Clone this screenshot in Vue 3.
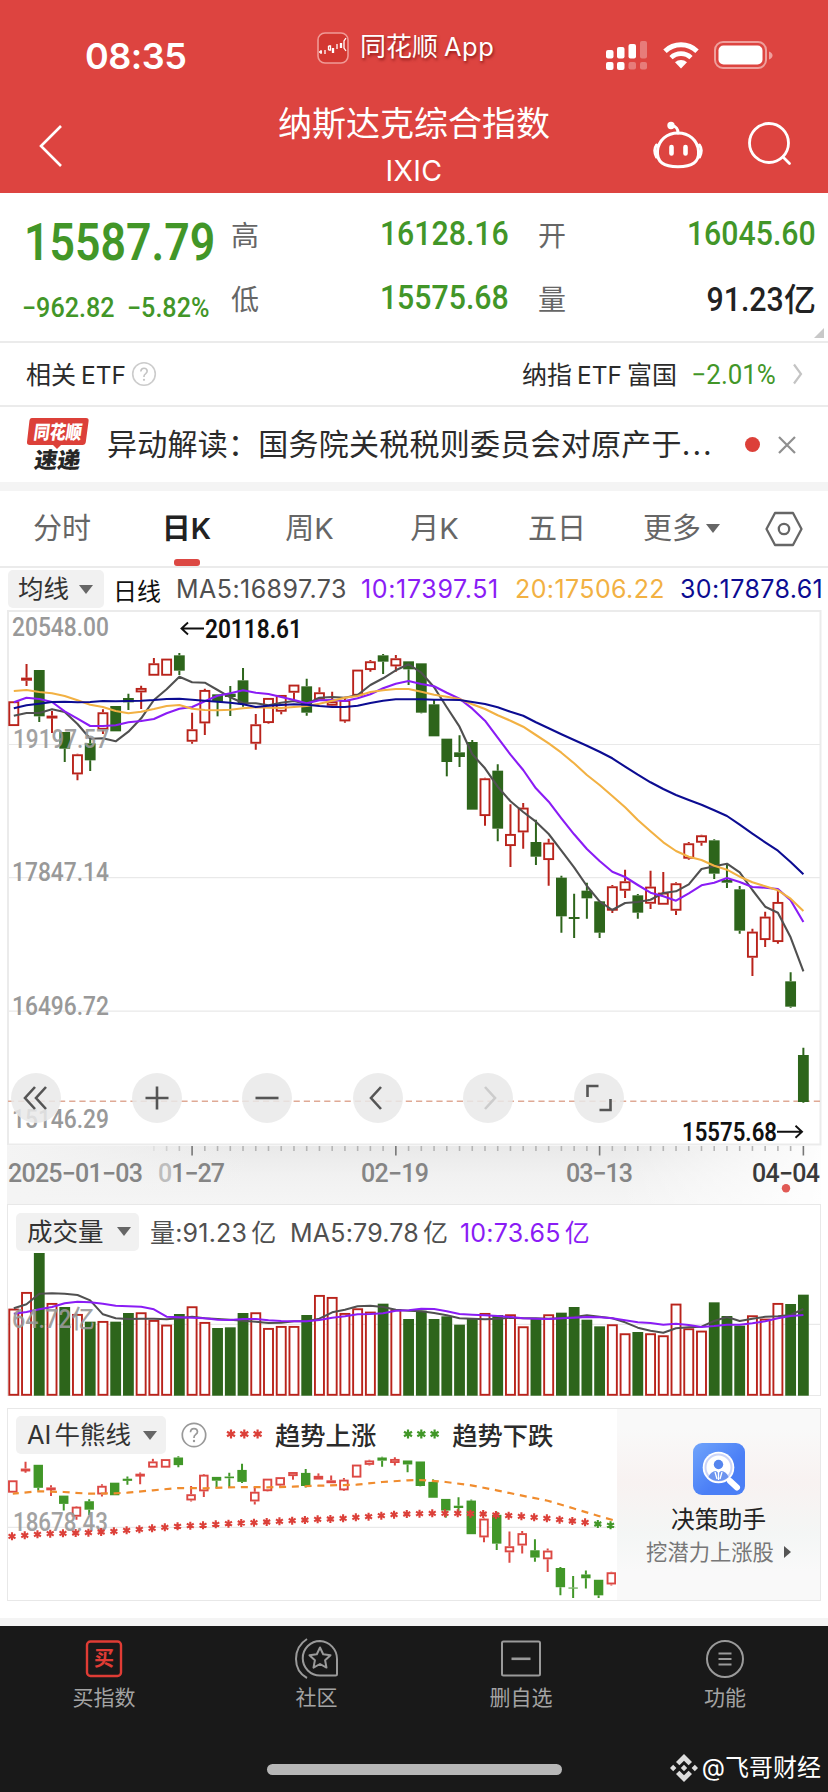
<template>
  <div class="page">
    <header class="top">
      <div class="status">
        <span class="time">08:35</span>
        <div class="capsule">
          <svg width="32" height="32" viewBox="0 0 32 32">
            <rect x="1" y="1" width="30" height="30" rx="7" fill="#d33731" stroke="#f09a96" stroke-width="1.6" />
            <path d="M2 20h3M4 18v4M8 18v4M11.500 14v4M11.500 14h2v4h-2M15.500 16v5M16.500 16v5M20 12v5M23.500 11v5M24.500 11v5M29 6l-2 3v7l2 3" fill="none" stroke="#fff" stroke-width="1.300" />
          </svg>
          <span class="capsule-text">同花顺<b>App</b></span>
        </div>
        <svg class="phone" width="170" height="32" viewBox="0 0 170 32">
          <g fill="#fff">
            <rect x="1" y="10" width="7.500" height="8.500" rx="2" />
            <rect x="12" y="7" width="7.500" height="11.500" rx="2" />
            <rect x="23.500" y="4" width="7.500" height="14.500" rx="2" />
            <rect x="1" y="22" width="7.500" height="8" rx="2" />
            <rect x="12" y="22" width="7.500" height="8" rx="2" />
            <g opacity=".3">
              <rect x="35" y="1" width="7" height="17.500" rx="2" />
              <rect x="23.500" y="22" width="7.500" height="7.500" rx="2" />
              <rect x="35" y="22" width="7" height="7.500" rx="2" />
            </g>
          </g>
          <g fill="none" stroke="#fff" stroke-width="5">
            <path d="M60 11.200a23.200 23.200 0 0 1 32 0" />
            <path d="M66 17.600a14.500 14.500 0 0 1 20 0" stroke-width="4.600" />
          </g>
          <path d="M76 28.500l-6-6.200a9 9 0 0 1 12 0z" fill="#fff" />
          <rect x="110" y="2" width="51" height="26" rx="8" fill="none" stroke="#ef9f9c" stroke-width="2" />
          <rect x="113.500" y="5.500" width="44" height="19" rx="5" fill="#fff" />
          <path d="M164 11.500q3.500 1.500 3.500 4t-3.500 4z" fill="#ef9f9c" />
        </svg>
      </div>
      <div class="titlebar">
        <svg class="back" width="26" height="44" viewBox="0 0 26 44">
          <path d="M23 2L3 22l20 20" fill="none" stroke="#fff" stroke-width="2.600" />
        </svg>
        <div class="title">
          <h1>纳斯达克综合指数</h1>
          <p>IXIC</p>
        </div>
        <div class="top-icons">
          <svg width="52" height="48" viewBox="0 0 52 48" fill="none" stroke="#fff" stroke-width="3" stroke-linecap="round">
            <path d="M26 12c11 0 19.500 7 20.500 18 .8 11-6 15.800-20.500 15.800S4.700 41 5.500 30C6.500 19 15 12 26 12z" />
            <path d="M4.500 24q-3.500 5 0 12M47.500 24q3.500 5 0 12" />
            <path d="M26 12c0-5-2-6.500-6-7.500" />
            <circle cx="19" cy="4.500" r="2.200" fill="#fff" />
            <path d="M19.500 26v6.500M33.500 26v6.500" stroke-width="4.600" />
          </svg>
          <svg width="46" height="46" viewBox="0 0 46 46" fill="none" stroke="#fff" stroke-width="2.800" stroke-linecap="round">
            <circle cx="22" cy="22" r="19.500" />
            <path d="M36 36l6.500 6.500" />
          </svg>
        </div>
      </div>
    </header>

    <section class="quote">
      <div class="quote-main">
        <div class="price"><span class="din">15587.79</span></div>
        <div class="change"><span class="din">−962.82</span><span class="din">−5.82%</span></div>
      </div>
      <dl class="stats">
        <div v-for="s in stats" :key="s.label" class="stat">
          <dt>{{ s.label }}</dt>
          <dd :class="{ dark: s.unit }"><span class="din">{{ s.value }}</span><i v-if="s.unit">{{ s.unit }}</i></dd>
        </div>
      </dl>
      <svg class="corner" width="10" height="10" viewBox="0 0 10 10"><path d="M10 0v10H0z" fill="#c8c8c8" /></svg>
    </section>

    <section class="etf">
      <span class="cjk-latin">相关<b>ETF</b></span>
      <svg class="help" width="26" height="26" viewBox="0 0 26 26">
        <circle cx="13" cy="13" r="11.300" fill="none" stroke="#ccc" stroke-width="1.600" />
        <path d="M9.800 10.500q.2-3.300 3.200-3.300t3.200 2.900q0 1.500-1.700 2.700-1.500 1-1.500 2.500v.7" fill="none" stroke="#c4c4c4" stroke-width="1.600" />
        <circle cx="13" cy="18.800" r="1.100" fill="#c4c4c4" />
      </svg>
      <span class="fund cjk-latin">纳指<b>ETF</b>富国</span>
      <span class="rate"><span class="din">−2.01%</span></span>
      <svg width="12" height="24" viewBox="0 0 12 24"><path d="M2 2.500l7 9.500-7 9.500" fill="none" stroke="#c4c4c4" stroke-width="2.200" /></svg>
    </section>

    <section class="news">
      <svg width="66" height="56" viewBox="0 0 66 56" class="badge">
        <path d="M6 1h54q3 0 2.600 3l-2.800 21q-.4 3-3.400 3H35l-4 4-4-4H4q-3.400 0-3-3L3.400 4Q3.700 1 6 1z" fill="#dc4039" />
        <text transform="translate(7 22) skewX(-8)" textLength="48" lengthAdjust="spacingAndGlyphs" font-size="19" font-weight="900" fill="#fff">同花顺</text>
        <text transform="translate(7.500 51) skewX(-8)" textLength="46" lengthAdjust="spacingAndGlyphs" font-size="22" font-weight="900" fill="#262626">速递</text>
      </svg>
      <p>异动解读：国务院关税税则委员会对原产于<span>...</span></p>
      <i class="dot"></i>
      <svg class="close" width="20" height="20" viewBox="0 0 20 20"><path d="M2 2l16 16M18 2L2 18" stroke="#8f8f8f" stroke-width="2.200" /></svg>
    </section>

    <nav class="tabs">
      <a v-for="t in tabs" :key="t" :class="{ active: t === current }" @click="current = t">{{ t }}</a>
      <a class="more">更多<i class="caret"></i></a>
      <svg width="40" height="36" viewBox="0 0 40 36" fill="none" stroke="#666" stroke-width="2.300">
        <path d="M11 2h18l8.500 16L29 34H11L2.500 18z" stroke-linejoin="round" />
        <circle cx="20" cy="18" r="5.200" />
      </svg>
    </nav>

    <div class="legend">
      <button class="pill ma">均线<i class="caret"></i></button>
      <span class="name">日线</span>
      <span class="m5">MA5:16897.73</span>
      <span class="m10">10:17397.51</span>
      <span class="m20">20:17506.22</span>
      <span class="m30">30:17878.61</span>
    </div>

    <div class="kline">
      <svg width="828" height="536" viewBox="0 610 828 536">
        <rect x="8" y="611" width="812.500" height="533.500" fill="none" stroke="#ebebeb" stroke-width="2" />
        <path d="M9 744.500H820M9 877.700H820M9 1011.200H820" stroke="#e9e9e9" stroke-width="1.200" />
        <path d="M8 1101.300H820" stroke="#dfa995" stroke-width="1.500" stroke-dasharray="6.200 4" />
        <g class="axis">
          <text v-for="l in priceLabels" :key="l.text" x="12" :y="l.y" textLength="97" lengthAdjust="spacingAndGlyphs">{{ l.text }}</text>
        </g>
        <g v-for="(c, i) in candles" :key="i" :class="c.up ? 'up' : 'down'">
          <path :d="wick(c, i, priceY)" stroke-width="2" />
          <rect v-bind="body(c, i, priceY, 10.800)" />
        </g>
        <g fill="none" stroke-width="2.100" stroke-linejoin="round">
          <path :d="line(ma5, priceY)" stroke="#505050" />
          <path :d="line(ma10, priceY)" stroke="#8a1cf5" />
          <path :d="line(ma20, priceY)" stroke="#f2b143" />
          <path :d="line(ma30, priceY)" stroke="#0c0c92" />
        </g>
        <g class="axis over">
          <text x="13" y="748" textLength="96" lengthAdjust="spacingAndGlyphs">19197.57</text>
        </g>
        <g class="mark">
          <path d="M204 628.500h-22m6-6l-6.500 6 6.500 6M777 1131.800h25m-6.500-6l6.500 6-6.500 6" fill="none" stroke="#111" stroke-width="1.900" />
          <text x="205" y="637.500" textLength="97" lengthAdjust="spacingAndGlyphs">20118.61</text>
          <text x="682" y="1140.500" textLength="95" lengthAdjust="spacingAndGlyphs">15575.68</text>
        </g>
      </svg>
      <div class="tools">
        <button v-for="(t, i) in tools" :key="i" :class="{ off: t.off }">
          <svg width="30" height="30" viewBox="0 0 30 30"><path :d="t.d" /></svg>
        </button>
      </div>
    </div>

    <svg class="ruler" width="828" height="58" viewBox="0 1146 828 58">
      <defs>
        <linearGradient id="shade" x1="0" y1="0" x2="0" y2="1">
          <stop offset="0" stop-color="#e9e9e9" />
          <stop offset=".5" stop-color="#f1f1f1" />
          <stop offset="1" stop-color="#f5f5f5" />
        </linearGradient>
        <linearGradient id="fade">
          <stop offset="0" stop-color="#f4f4f4" />
          <stop offset=".3" stop-color="#f4f4f4" stop-opacity="0" />
          <stop offset=".75" stop-color="#fff" stop-opacity="0" />
          <stop offset="1" stop-color="#fff" stop-opacity=".9" />
        </linearGradient>
      </defs>
      <rect x="7" y="1146" width="814" height="58" fill="url(#shade)" />
      <rect x="7" y="1146" width="814" height="58" fill="url(#fade)" />
      <path v-for="i in 52" :key="i" :d="tick(i + 10)" :stroke="(i + 10) % 16 === 14 ? '#777' : '#b5b5b5'" :opacity="i < 4 ? i / 4 : 1" stroke-width="1.600" />
      <g class="dates">
        <text x="8" y="1181.500" textLength="135">2025−01−03</text>
        <text x="158" y="1181.500" textLength="67"><tspan fill="#bdbdbd">0</tspan>1−27</text>
        <text x="361" y="1181.500" textLength="68">02−19</text>
        <text x="566" y="1181.500" textLength="67">03−13</text>
        <text x="752" y="1181.500" textLength="68" fill="#3a3a3a">04−04</text>
      </g>
      <circle cx="786" cy="1188.300" r="4.200" fill="#e15a55" />
    </svg>

    <section class="panel">
      <div class="panel-head">
        <button class="pill vol">成交量<i class="caret"></i></button>
        <span class="v1">量:91.23<em>亿</em></span>
        <span class="v2">MA5:79.78<em>亿</em></span>
        <span class="v3">10:73.65<em>亿</em></span>
      </div>
      <svg width="812" height="144" viewBox="8 1251 812 144">
        <path d="M8 1323.400H820" stroke="#e9e9e9" stroke-width="1.200" />
        <rect v-for="(v, i) in volumes" :key="i" v-bind="bar(v, i)" :class="candles[i].up ? 'bar up' : 'bar down'" />
        <g fill="none" stroke-width="2" stroke-linejoin="round">
          <path :d="line(vol5, volY)" stroke="#505050" />
          <path :d="line(vol10, volY)" stroke="#8a1cf5" />
        </g>
        <g class="axis over">
          <text x="12" y="1327" textLength="83" lengthAdjust="spacingAndGlyphs">64.72亿</text>
        </g>
      </svg>
    </section>

    <section class="panel ai">
      <div class="ai-chart">
        <div class="panel-head">
          <button class="pill bull"><b>AI</b>牛熊线<i class="caret"></i></button>
          <svg class="help" width="26" height="26" viewBox="0 0 26 26">
            <circle cx="13" cy="13" r="11.700" fill="none" stroke="#999" stroke-width="1.700" />
            <path d="M9.500 10.300q.2-3.600 3.500-3.600t3.500 3.100q0 1.700-1.900 2.800-1.600 1-1.600 2.900v.5" fill="none" stroke="#999" stroke-width="1.700" />
            <circle cx="13" cy="19" r="1.200" fill="#999" />
          </svg>
          <svg class="stars" width="38" height="12" viewBox="-6 -6 38 12"><path v-for="x in [0, 13.300, 26.600]" :key="x" :d="star(x, 0, 4.600)" stroke="#dc4039" stroke-width="2.200" /></svg>
          <span class="trend">趋势上涨</span>
          <svg class="stars second" width="38" height="12" viewBox="-6 -6 38 12"><path v-for="x in [0, 13.300, 26.600]" :key="x" :d="star(x, 0, 4.600)" stroke="#419728" stroke-width="2.200" /></svg>
          <span class="trend">趋势下跌</span>
        </div>
        <svg width="608" height="144" viewBox="9 1455 608 144">
          <path d="M8 1527.300H617" stroke="#e9e9e9" stroke-width="1.200" />
          <g v-for="(c, i) in candles.slice(0, 48)" :key="i" :class="c.up ? 'up light' : 'down light'">
            <path :d="wick(c, i, aiY)" stroke-width="2" />
            <rect v-bind="body(c, i, aiY, 9.400)" />
          </g>
          <path :d="trendPath" fill="none" stroke="#f08c2e" stroke-width="2.200" stroke-dasharray="7 5.750" stroke-dashoffset="1" />
          <g class="axis over"><text x="14" y="1531" textLength="95" lengthAdjust="spacingAndGlyphs">18678.43</text></g>
          <path v-for="(s, i) in stops" :key="i" :d="star(i * STEP + 13, 1400 + s / 3, 4)" :stroke="i > 45 ? '#419728' : '#dc4039'" stroke-width="2.100" />
        </svg>
      </div>
      <aside class="promo">
        <svg width="52" height="52" viewBox="0 0 52 52">
          <defs>
            <linearGradient id="blue" x1="0" y1="0" x2="1" y2="1">
              <stop offset="0" stop-color="#70a4fb" />
              <stop offset=".6" stop-color="#4b7ff6" />
            </linearGradient>
          </defs>
          <rect width="52" height="52" rx="9" fill="url(#blue)" />
          <path d="M37 38l7 6.500" stroke="#fff" stroke-width="6" stroke-linecap="round" />
          <circle cx="25.500" cy="24.500" r="15.800" fill="#fff" />
          <circle cx="25.500" cy="24.500" r="13" fill="#fff" stroke="#ccd5f8" stroke-width="2" />
          <circle cx="25.500" cy="21.500" r="4.700" fill="#5585ee" />
          <path d="M15.500 34q2-5.500 7.500-6l2.500 2 2.500-2q5.500.5 7.500 6-4 4-10 4t-10-4z" fill="#6d94ef" />
          <path d="M25.500 29v8M22 29l2 7M29 29l-2 7" stroke="#fff" stroke-width="1.300" />
        </svg>
        <strong>决策助手</strong>
        <span>挖潜力上涨股<i></i></span>
      </aside>
    </section>

    <footer class="bottom">
      <a>
        <svg width="40" height="40" viewBox="0 0 40 40">
          <rect x="3" y="2.500" width="34" height="34.500" rx="3.500" fill="none" stroke="#e03c35" stroke-width="2.400" />
          <text x="20" y="27" text-anchor="middle" font-size="20" font-weight="700" fill="#e03c35">买</text>
        </svg>
        <span>买指数</span>
      </a>
      <a>
        <svg width="46" height="42" viewBox="0 0 46 42" fill="none" stroke="#9a9a9a" stroke-width="2">
          <path d="M26 3a18 18 0 0 1 17 18v15q0 1.500-1.500 1.500H26A17.200 17.200 0 0 1 26 3z" />
          <path d="M13 1Q2 8 2 21t11 19" />
          <path d="M26 9.500l3.200 6.800 7.300.9-5.400 5.100 1.400 7.300-6.500-3.600-6.500 3.600 1.400-7.300-5.400-5.100 7.300-.9z" stroke-linejoin="round" />
        </svg>
        <span>社区</span>
      </a>
      <a>
        <svg width="42" height="40" viewBox="0 0 42 40" fill="none" stroke="#9a9a9a" stroke-width="2">
          <rect x="2" y="2.500" width="38" height="34" rx="1.500" />
          <path d="M11.500 19.800h19" stroke-width="2.600" />
        </svg>
        <span>删自选</span>
      </a>
      <a>
        <svg width="40" height="40" viewBox="0 0 40 40" fill="none" stroke="#9a9a9a" stroke-width="2">
          <circle cx="20" cy="20" r="18" />
          <path d="M13.500 14.500h13M13.500 20h13M13.500 25.500h13" />
        </svg>
        <span>功能</span>
      </a>
      <div class="home"></div>
      <div class="watermark">
        <svg width="28" height="28" viewBox="0 0 28 28" fill="#ddd">
          <path d="M14 0l8 8-3.400 3.300L14 6.700l-4.600 4.600L6 8zM14 28l8-8-3.400-3.300-4.600 4.600-4.600-4.600L6 20zM3.200 10.800L6.400 14l-3.200 3.200L0 14zM24.800 10.800L28 14l-3.200 3.200-3.200-3.200zM14 10.800l3.200 3.200-3.200 3.200-3.200-3.200z" />
        </svg>
        <span>@飞哥财经</span>
      </div>
    </footer>
  </div>
</template>

<script setup>
import { ref } from "vue";

const STEP = 12.735;
const X0 = 13.8;

const current = ref("日K");
const tabs = ["分时", "日K", "周K", "月K", "五日"];

const stats = [
  { label: "高", value: "16128.16" },
  { label: "开", value: "16045.60" },
  { label: "低", value: "15575.68" },
  { label: "量", value: "91.23", unit: "亿" },
];

const priceLabels = [
  { text: "20548.00", y: 635.5 },
  { text: "17847.14", y: 880.5 },
  { text: "16496.72", y: 1014.5 },
  { text: "15146.29", y: 1127.5 },
];

const tools = [
  { d: "M14 4L4 15l10 11M25 4L15 15l10 11" },
  { d: "M15 3.500v23M3.500 15h23" },
  { d: "M3.500 15h23" },
  { d: "M18 4L8 15l10 11" },
  { d: "M12 4l10 11-10 11", off: true },
  { d: "M14.500 3H3.500v11M15.500 27h11V16" },
];

// up/down, body top, body bottom, high, low (thirds of a pixel from the plot top)
const candles = [
  "r 304 378 304 378", "r 233 242 192 258", "g 210 349 210 366", "r 347 355 333 399",
  "g 396 446 396 486", "r 463 523 461 541", "g 430 481 418 513", "r 337 389 328 402",
  "g 318 394 318 394", "g 294 307 281 330", "r 264 277 257 327", "r 190 227 174 227",
  "r 176 227 176 227", "g 166 212 159 225", "r 388 425 338 431", "r 270 370 266 405",
  "g 283 306 283 349", "g 281 291 258 348", "g 241 313 204 320", "r 373 431 342 449",
  "r 294 369 294 371", "r 285 335 285 343", "r 254 278 254 300", "g 259 338 236 347",
  "r 277 299 262 299", "r 304 317 275 319", "r 300 364 290 368", "r 209 287 209 287",
  "r 184 210 180 215", "g 166 185 162 222", "r 175 199 165 215", "g 184 208 184 255",
  "g 190 338 190 340", "g 313 409 298 409", "g 416 486 416 529", "g 457 471 406 501",
  "g 426 629 420 629", "r 535 648 533 677", "g 512 686 493 724", "r 702 738 613 801",
  "r 623 697 609 746", "g 726 770 659 795", "r 728 780 716 857", "g 833 949 827 998",
  "g 951 957 881 1014", "g 872 895 848 956", "g 904 998 904 1014", "r 859 932 855 939",
  "r 844 872 809 894", "g 886 938 882 956", "r 860 911 812 927", "r 878 914 816 914",
  "r 850 932 847 945", "r 730 776 726 779", "r 706 728 704 737", "g 721 821 718 837",
  "g 840 848 790 864", "g 868 992 858 1001", "r 995 1073 986 1128", "r 950 1020 935 1041",
  "r 906 1026 873 1031", "g 1144 1220 1117 1223", "g 1365 1506 1343 1508",
].map((row) => {
  const [kind, top, bottom, high, low] = row.split(" ");
  return { up: kind === "r", top: +top, bottom: +bottom, high: +high, low: +low };
});

const ma5 = [347, 339, 339, 328, 336, 372, 416, 415, 424, 395, 355, 300, 268, 230, 247, 248, 270, 292, 309, 310, 316, 308, 303, 312, 293, 291, 293, 285, 255, 235, 211, 193, 218, 262, 322, 380, 463, 505, 560, 604, 636, 665, 702, 752, 802, 858, 904, 930, 909, 906, 899, 879, 874, 853, 807, 799, 791, 817, 870, 920, 938, 1012, 1114];
const ma10 = [307, 293, 297, 306, 334, 356, 378, 378, 376, 367, 363, 357, 340, 326, 321, 304, 287, 280, 271, 278, 282, 291, 300, 310, 301, 300, 303, 295, 283, 265, 251, 243, 252, 259, 278, 296, 326, 362, 413, 464, 510, 565, 605, 655, 703, 747, 783, 815, 831, 855, 878, 889, 902, 880, 856, 848, 834, 846, 861, 863, 867, 901, 966];
const ma20 = [273, 270, 276, 280, 288, 301, 314, 321, 333, 340, 335, 327, 318, 315, 326, 330, 331, 329, 325, 322, 323, 324, 321, 318, 311, 302, 293, 288, 276, 271, 267, 267, 275, 284, 290, 297, 313, 327, 346, 362, 380, 405, 430, 458, 490, 525, 555, 588, 622, 660, 694, 727, 753, 770, 780, 797, 809, 830, 847, 859, 871, 896, 933];
const ma30 = [325, 316, 311, 306, 305, 307, 306, 303, 304, 303, 302, 300, 297, 296, 299, 302, 305, 308, 313, 321, 317, 315, 313, 314, 318, 321, 321, 317, 309, 302, 298, 298, 298, 299, 299, 300, 306, 312, 322, 335, 347, 367, 385, 403, 420, 437, 455, 475, 500, 524, 547, 567, 585, 600, 614, 631, 648, 674, 701, 727, 752, 786, 823];

const volumes = [323, 273, 156, 306, 318, 339, 362, 360, 362, 336, 334, 357, 371, 339, 316, 363, 381, 379, 336, 334, 381, 375, 375, 342, 282, 288, 336, 322, 332, 308, 325, 354, 329, 354, 346, 371, 353, 336, 342, 340, 376, 352, 340, 335, 318, 356, 376, 370, 397, 393, 397, 403, 308, 382, 389, 304, 345, 374, 343, 353, 306, 309, 281];
const vol5 = [322, 310, 278, 277, 278, 282, 298, 340, 352, 354, 353, 353, 355, 352, 347, 352, 354, 356, 359, 362, 366, 365, 361, 361, 353, 334, 326, 316, 314, 318, 326, 329, 331, 336, 343, 352, 353, 355, 353, 350, 352, 352, 353, 352, 348, 343, 347, 352, 364, 380, 389, 395, 382, 379, 377, 360, 348, 360, 353, 347, 346, 342, 324];
const vol10 = [338, 333, 325, 318, 307, 302, 304, 308, 314, 316, 317, 325, 347, 349, 350, 352, 356, 357, 354, 354, 358, 360, 361, 361, 357, 350, 346, 340, 339, 337, 329, 328, 323, 324, 331, 339, 341, 343, 345, 348, 352, 353, 354, 352, 350, 348, 349, 352, 358, 364, 366, 371, 368, 372, 378, 375, 371, 371, 367, 361, 352, 345, 342];

const stops = [409, 406, 403, 401, 400, 399, 398, 396, 394, 391, 388, 385, 382, 379, 377, 376, 373, 371, 369, 368, 366, 364, 362, 360, 358, 357, 355, 352, 350, 347, 344, 342, 341, 340, 340, 340, 341, 342, 345, 347, 349, 352, 355, 359, 363, 367, 372, 376];
const trend = [[0, 281], [2, 274], [4, 276], [6, 281], [8, 280], [9, 278], [11, 271], [13, 264], [15, 265], [18, 261], [20, 262], [22, 260], [24, 257], [27, 254], [29, 246], [31, 241], [32, 240], [34, 246], [36, 256], [38, 271], [40, 287], [42, 302], [44, 325], [46, 348], [47.2, 361]];

const x = (i) => X0 + i * STEP;
const priceY = (v) => 600 + v / 3;
const volY = (v) => 1200 + v / 3;
const aiY = (v) => 1400 + (v * 0.497 + 90) / 3;

const line = (values, y) =>
  "M" + values.map((v, i) => `${x(i).toFixed(1)} ${y(v).toFixed(1)}`).join("L");

const trendPath = "M" + trend.map(([i, v]) => `${x(i).toFixed(1)} ${(1400 + v / 3).toFixed(1)}`).join("L");

const wick = (c, i, y) =>
  `M${x(i)} ${y(c.high)}V${y(c.top)}M${x(i)} ${y(c.bottom)}V${y(c.low)}`;

const body = (c, i, y, w) => {
  const inset = c.up ? 0.9 : 0;
  return {
    x: x(i) - w / 2 + inset,
    y: y(c.top) + inset,
    width: w - inset * 2,
    height: Math.max(y(c.bottom) - y(c.top) - inset * 2, 1),
  };
};

const bar = (v, i) => {
  const inset = candles[i].up ? 0.9 : 0;
  return {
    x: x(i) - 5.4 + inset,
    y: volY(v) + inset,
    width: 10.8 - inset * 2,
    height: 1394.7 - volY(v) - inset * 2,
  };
};

const tick = (i) => `M${x(i)} 1146v${i % 16 === 14 ? 9.5 : 5}`;

const star = (cx, cy, r) => {
  const dx = r * 0.87;
  const dy = r * 0.5;
  return `M${cx} ${cy - r}v${r * 2}M${cx - dx} ${cy - dy}l${dx * 2} ${dy * 2}M${cx - dx} ${cy + dy}l${dx * 2} ${-dy * 2}`;
};
</script>

<style>
body {
  margin: 0;
  background: #fff;
}
</style>

<style scoped>
.page {
  width: 828px;
  height: 1792px;
  overflow: hidden;
  display: flex;
  flex-direction: column;
  background: #fff;
  color: #2b2b2b;
  font-family: Inter, "Noto Sans CJK SC", sans-serif;
}

.page > * {
  flex-shrink: 0;
  box-sizing: border-box;
}

svg {
  display: block;
  flex-shrink: 0;
}

h1, p, dl, dd {
  margin: 0;
}

i, em {
  font-style: normal;
}

b {
  font-weight: 400;
}

button {
  border: 0;
  padding: 0;
  font: inherit;
  color: inherit;
}

.din {
  display: inline-block;
  font-family: Roboto, sans-serif;
  font-weight: 500;
  transform: scaleX(0.89);
  transform-origin: right center;
}

/* header */
.top {
  height: 193px;
  background: #dd4440;
  color: #fff;
}

.status {
  height: 96px;
  display: grid;
  grid-template-columns: 317px 288px 1fr;
}

.time {
  padding: 34px 0 0 85px;
  font-size: 36px;
  line-height: 44px;
  font-weight: 600;
  letter-spacing: -0.5px;
}

.capsule {
  display: flex;
  align-items: center;
  gap: 11px;
  height: 95px;
}

.capsule-text {
  font-size: 26px;
  line-height: 36px;
  margin-top: -2px;
  text-shadow: 1px 2px 3px rgba(90, 0, 0, 0.6);
}

.capsule-text b {
  margin-left: 6px;
  font-size: 25.500px;
  letter-spacing: 0.5px;
}

.phone {
  margin-top: 40px;
}

.titlebar {
  display: grid;
  grid-template-columns: 278px 272px 1fr;
}

.back {
  margin: 28px 0 0 38px;
}

.title {
  text-align: center;
}

.title h1 {
  padding-top: 3px;
  font-size: 34px;
  line-height: 50px;
  font-weight: 400;
  white-space: nowrap;
}

.title p {
  font-size: 28.500px;
  line-height: 44px;
  letter-spacing: 0.3px;
}

.top-icons {
  display: flex;
  gap: 43px;
  padding: 25px 0 0 102px;
}

/* quote */
.quote {
  position: relative;
  height: 150px;
  display: grid;
  grid-template-columns: 231px 585px;
  border-bottom: 2px solid #ebebeb;
}

.quote-main {
  color: #429628;
}

.quote-main .din {
  transform-origin: left center;
}

.price {
  padding: 18px 0 0 24px;
  font-size: 51px;
  line-height: 62px;
  height: 62px;
}

.price .din {
  font-weight: 600;
  transform: scaleX(0.875);
}

.change {
  display: flex;
  padding: 19px 0 0 22px;
  font-size: 27px;
  line-height: 32px;
}

.change .din {
  width: 107px;
  transform: scaleX(0.93);
}

.stats {
  display: grid;
  grid-template-columns: 278px 278px;
  column-gap: 29px;
  grid-template-rows: 64px 64px;
  padding-top: 9px;
}

.stat {
  display: flex;
  justify-content: space-between;
  align-items: center;
}

.stat dt {
  font-size: 28px;
  color: #666;
}

.stat dd {
  margin-top: -3px;
  font-size: 34px;
  color: #429628;
  white-space: nowrap;
}

.stat dd.dark {
  color: #222;
}

.stat dd i {
  font-size: 32px;
  font-weight: 500;
}

.corner {
  position: absolute;
  right: 4px;
  bottom: 3px;
}

/* etf */
.etf {
  height: 64px;
  display: flex;
  align-items: center;
  padding: 0 24px 0 26px;
  font-size: 25px;
  border-bottom: 2px solid #ebebeb;
}

.cjk-latin {
  margin-top: -3px;
}

.cjk-latin b {
  margin: 0 5px;
  font-size: 24.500px;
}

.fund {
  margin-left: auto;
}

.rate {
  width: 99px;
  margin-right: 16px;
  text-align: right;
  color: #429628;
  font-size: 27px;
}

.rate .din {
  font-weight: 400;
  transform: scaleX(0.96);
}

/* news */
.news {
  height: 75px;
  display: flex;
  align-items: center;
  padding-left: 26px;
}

.badge {
  font-family: "Noto Sans CJK SC", sans-serif;
}

.news p {
  margin: -6px 0 0 15px;
  width: 638px;
  font-size: 30px;
  letter-spacing: 0.25px;
  white-space: nowrap;
}

.news p span {
  letter-spacing: 2px;
}

.dot {
  width: 15px;
  height: 15px;
  border-radius: 50%;
  background: #dc4039;
}

.close {
  margin-left: 17px;
}

/* tabs */
.tabs {
  height: 86px;
  border-top: 9px solid #f4f4f4;
  border-bottom: 2px solid #ebebeb;
  display: grid;
  grid-template-columns: 124px 125px 121px 129px 116px 133px 38px;
  align-items: center;
  justify-items: center;
  font-size: 29px;
  color: #666;
}

.tabs > svg {
  justify-self: end;
  margin-right: -18px;
}

.tabs a {
  position: relative;
  line-height: 75px;
}

.tabs .active {
  color: #222;
  font-weight: 600;
}

.tabs .active::after {
  content: "";
  position: absolute;
  left: 50%;
  bottom: 0;
  width: 26px;
  height: 7px;
  margin-left: -13px;
  border-radius: 3px;
  background: #dc4843;
}

.tabs .more {
  display: flex;
  align-items: center;
  gap: 5px;
}

.caret {
  width: 0;
  height: 0;
  border: 7px solid transparent;
  border-top: 9px solid #666;
  border-bottom: 0;
}

.pill {
  height: 38px;
  box-sizing: border-box;
  display: flex;
  align-items: center;
  justify-content: space-between;
  border-radius: 5px;
  background: #f1f1f1;
  font-size: 25.500px;
  line-height: 34px;
  color: #333;
}

.legend {
  height: 42px;
  display: flex;
  align-items: center;
  padding-left: 8px;
  font-size: 25px;
  white-space: nowrap;
}

.ma {
  width: 96px;
  padding: 0 11px 0 10px;
}

.legend .name {
  width: 63px;
  margin-left: 9px;
  font-size: 24px;
  color: #111;
}

.m5 {
  width: 185px;
  color: #505050;
  letter-spacing: 0.450px;
}

.m10 {
  width: 154px;
  color: #8a1cf5;
  letter-spacing: 0.650px;
}

.m20 {
  width: 165px;
  color: #f2b143;
  letter-spacing: 0.400px;
}

.m30 {
  color: #0c0c92;
  letter-spacing: 0.400px;
}

/* candles */
.kline {
  position: relative;
  height: 536px;
}

.axis text {
  font: 500 25px Roboto, "Noto Sans CJK SC", sans-serif;
  fill: #999;
}

.mark text {
  font: 600 25px Roboto, sans-serif;
  fill: #111;
}

.dates text {
  font: 500 25px Roboto, sans-serif;
}

.dates {
  fill: #858585;
}

.up {
  stroke: #b9231b;
  fill: #fff;
}

.up rect,
.bar.up {
  stroke-width: 1.900;
}

.down path {
  stroke: #2d651b;
}

.down rect,
.bar.down {
  fill: #2d651b;
}

.up.light {
  stroke: #dc4843;
}

.down.light path {
  stroke: #419728;
}

.down.light rect {
  fill: #419728;
}

.over {
  opacity: 0.9;
}

.tools {
  position: absolute;
  left: 11px;
  top: 463px;
  display: flex;
  gap: 60.600px;
}

.tools button {
  width: 50px;
  height: 50px;
  display: flex;
  align-items: center;
  justify-content: center;
  border-radius: 50%;
  background: rgba(233, 233, 233, 0.85);
}

.tools button:first-child {
  margin-right: 10px;
}

.tools path {
  fill: none;
  stroke: #555;
  stroke-width: 2.600;
}

.tools .off path {
  stroke: #ccc;
}

/* lower panels */
.panel {
  width: 814px;
  margin-left: 7px;
  border: 1.500px solid #e8e8e8;
  height: 192px;
}

.panel-head {
  height: 47px;
  display: flex;
  align-items: center;
  padding-left: 8px;
  font-size: 25px;
  white-space: nowrap;
  color: #505050;
}

.panel-head em {
  margin-left: 4px;
}

.vol {
  width: 123px;
  padding: 0 8px 0 11px;
  margin-top: 6px;
}

.panel-head > span {
  padding-top: 5px;
  letter-spacing: 0.200px;
}

.v1 {
  width: 140px;
  margin-left: 11px;
}

.v2 {
  width: 170px;
}

.v3 {
  color: #8a1cf5;
}

.ai {
  margin-top: 12px;
  height: 193px;
  display: grid;
  grid-template-columns: 609px 1fr;
}

.ai .panel-head {
  height: 46px;
}

.bull {
  width: 150px;
  padding: 0 9px 0 11px;
  margin-top: 6px;
  gap: 3px;
}

.bull .caret {
  margin-left: 9px;
}

.ai .help {
  margin: 6px 0 0 15px;
}

.stars {
  margin: 3px 0 0 18px;
}

.panel-head .trend {
  margin-left: 12px;
  padding-top: 3px;
  font-size: 25.300px;
  font-weight: 500;
  letter-spacing: 0;
  color: #2b2b2b;
}

.stars.second {
  margin-left: 26px;
}

.promo {
  display: flex;
  flex-direction: column;
  align-items: center;
  padding-top: 34px;
  background: linear-gradient(#f9f9f9 10%, #f8f2f1 38%, #f4f6f5 65%, #f9f9f9 85%);
}

.promo strong {
  margin-top: 8px;
  font-size: 23.800px;
  line-height: 34px;
  font-weight: 400;
  color: #222;
}

.promo span {
  display: flex;
  align-items: center;
  gap: 10px;
  font-size: 21.300px;
  line-height: 30px;
  color: #777;
}

.promo i {
  border: 6px solid transparent;
  border-left: 7px solid #555;
  border-right: 0;
}

/* bottom bar */
.bottom {
  position: relative;
  margin-top: 17px;
  height: 175px;
  border-top: 8px solid #f4f4f4;
  background: #191919;
  display: grid;
  grid-template-columns: 208px 217px 192px 216px;
}

.bottom a {
  display: flex;
  flex-direction: column;
  align-items: center;
  padding-top: 12px;
  font-size: 21px;
  line-height: 30px;
  color: #a3a3a3;
}

.bottom a svg {
  height: 42px;
  margin-bottom: 3px;
}

.home {
  position: absolute;
  left: 267px;
  top: 138px;
  width: 295px;
  height: 11px;
  border-radius: 6px;
  background: #b7b7b7;
}

.watermark {
  position: absolute;
  right: 7px;
  top: 126px;
  display: flex;
  align-items: center;
  gap: 4px;
  font-size: 24px;
  line-height: 32px;
  color: #fff;
}
</style>
